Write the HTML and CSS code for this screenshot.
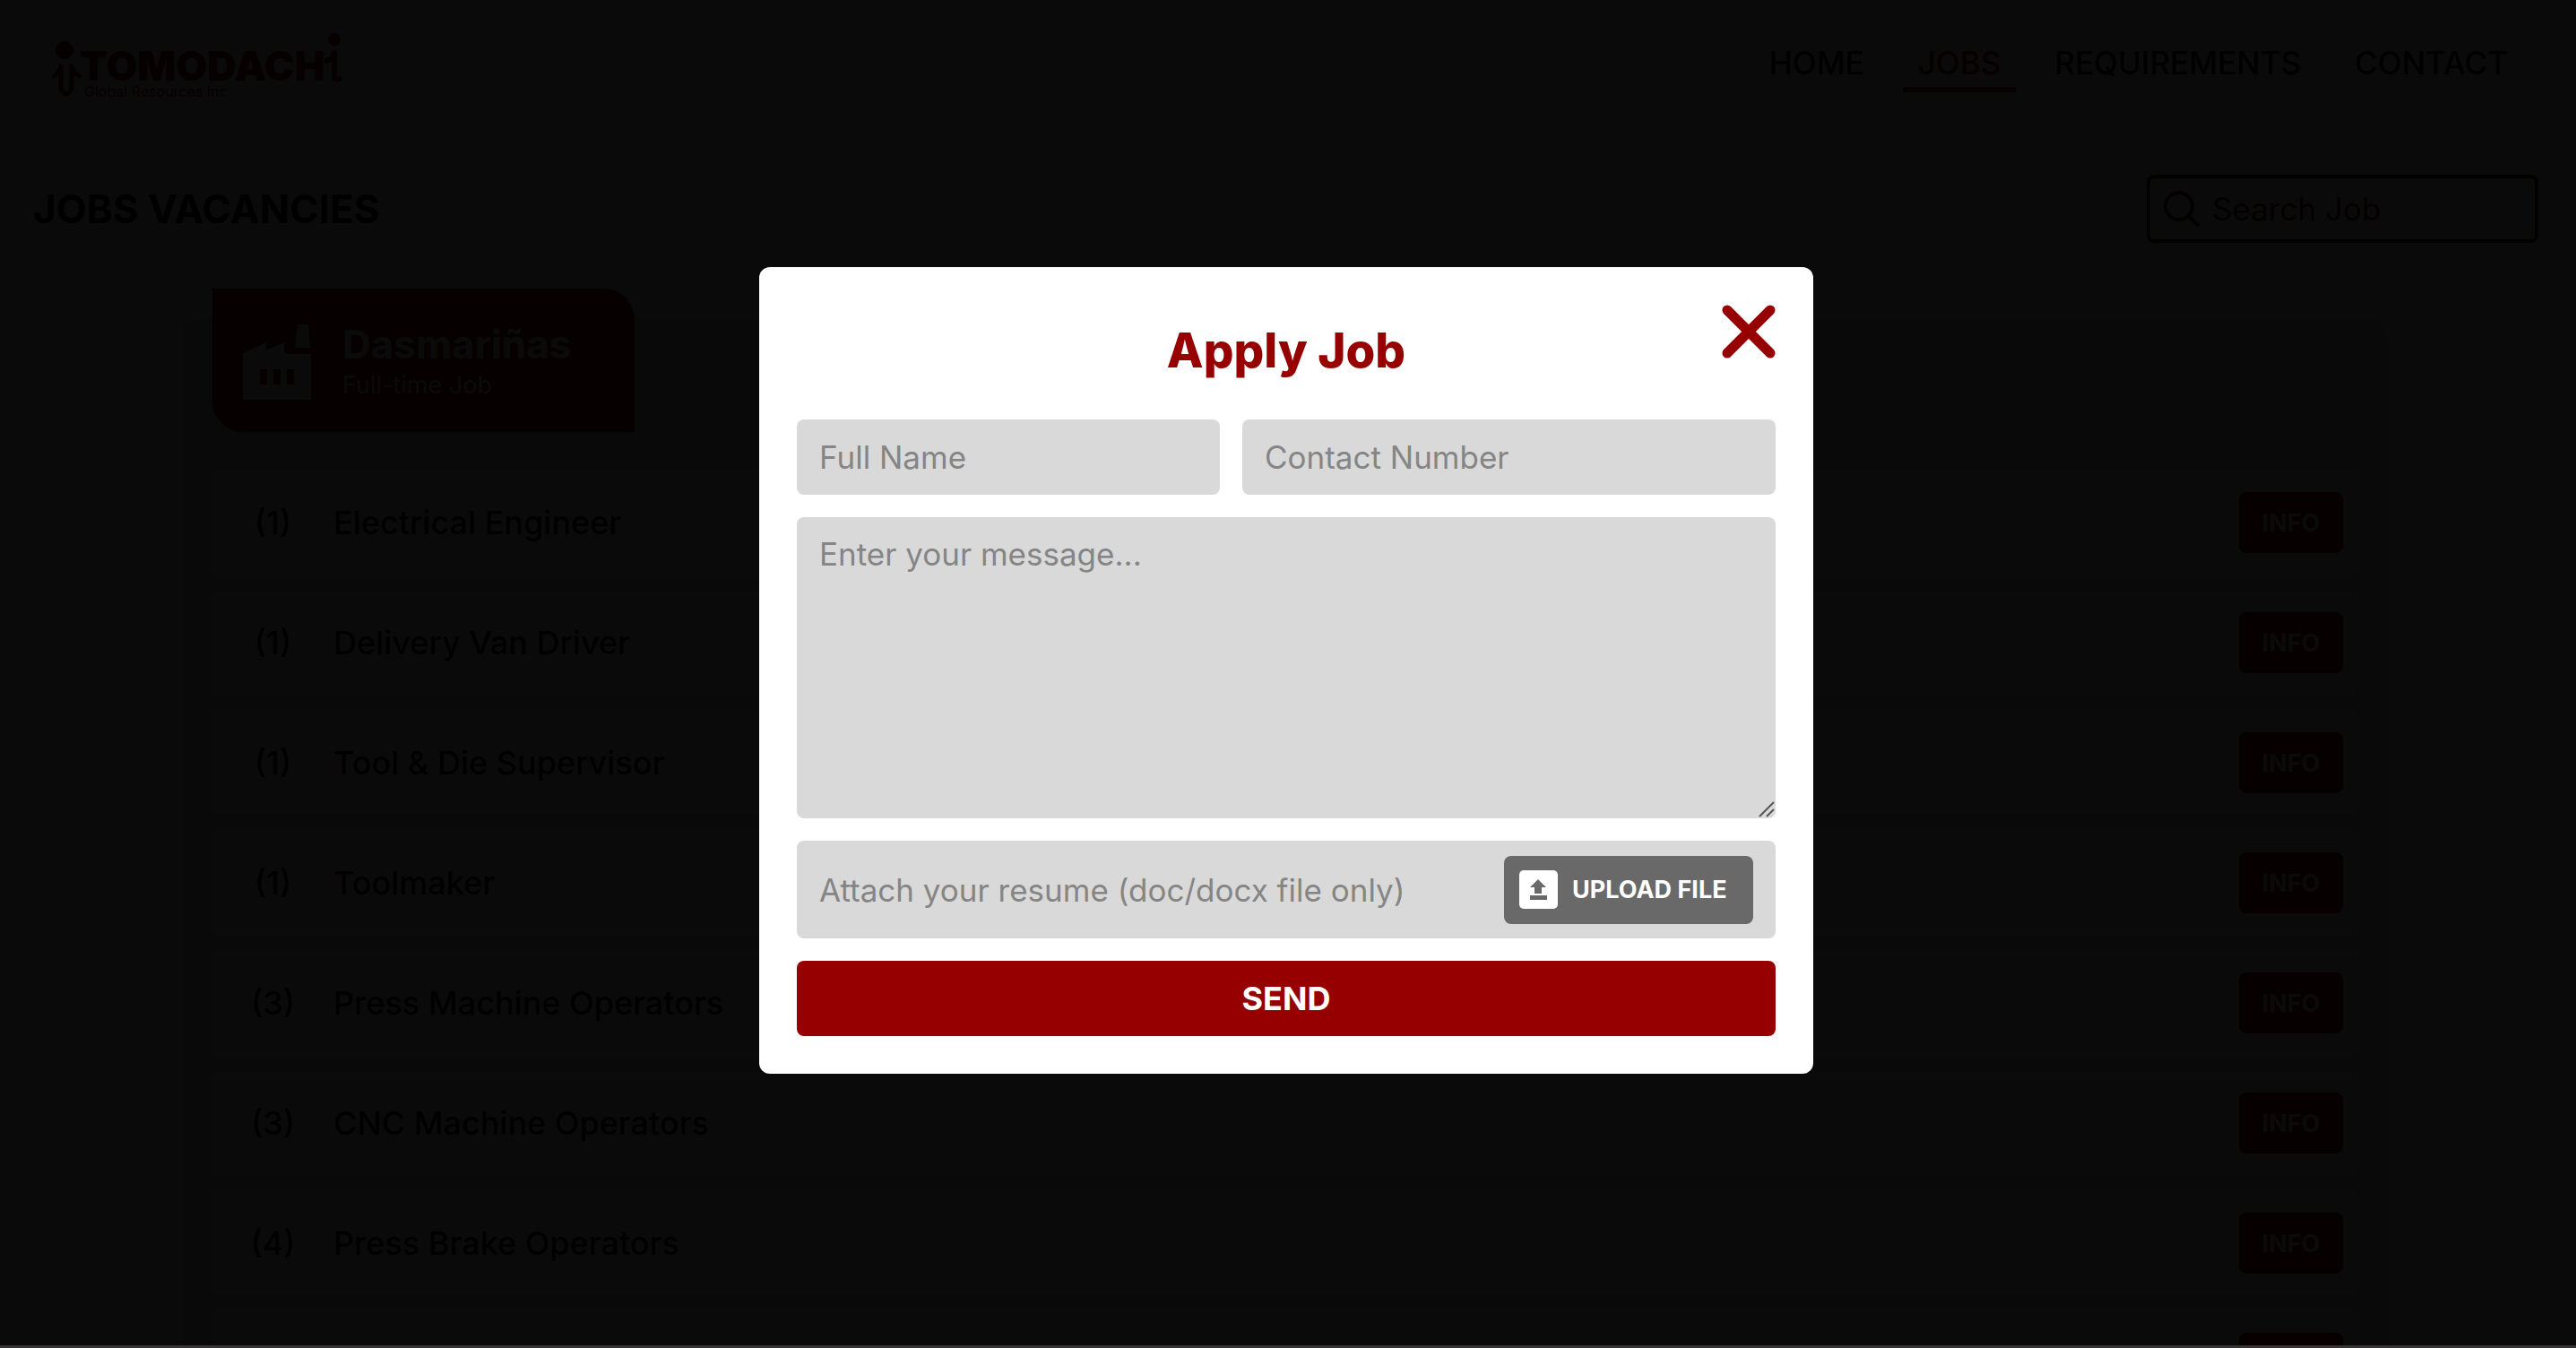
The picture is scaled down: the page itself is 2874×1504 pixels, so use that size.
FILE: index.html
```html
<!DOCTYPE html>
<html lang="en">
<head>
<meta charset="utf-8">
<meta name="viewport" content="width=device-width, initial-scale=1">
<title>Tomodachi Global Resources Inc - Jobs</title>
<link rel="stylesheet" href="styles.css">
</head>
<body class="modal-open">
<header class="site-header">
  <a class="logo" href="#" aria-label="Tomodachi Global Resources Inc">
    <svg width="330" height="80" viewBox="0 0 330 80">
      <g fill="#960000">
        <circle cx="18" cy="22" r="10"/>
        <circle cx="319" cy="10" r="7"/>
        <text class="logo-name" x="35" y="56">TOMODACH</text>
        <text class="logo-sub" x="40" y="74">Global Resources Inc</text>
      </g>
      <g fill="none" stroke="#960000" stroke-linecap="round" stroke-linejoin="round">
        <path stroke-width="5" d="M6 51q7-4 8-11v25q6 12 12 0V40q1 7 9 11"/>
        <path stroke-width="6" d="M310 34q8-2 9-9v25q0 6 6 4"/>
      </g>
    </svg>
  </a>
  <nav class="nav">
    <a href="#">HOME</a>
    <a href="#" class="active">JOBS</a>
    <a href="#">REQUIREMENTS</a>
    <a href="#">CONTACT</a>
  </nav>
</header>
<main>
  <div class="toolbar">
    <h1>JOBS VACANCIES</h1>
    <label class="search">
      <svg width="42" height="42" viewBox="0 0 42 42" fill="none" stroke="#600" stroke-width="4" stroke-linecap="round"><circle cx="18" cy="18" r="15"/><path d="M29 29l10 10"/></svg>
      <input type="search" placeholder="Search Job" aria-label="Search Job">
    </label>
  </div>
  <section class="panel">
    <div class="branch">
      <svg width="76" height="84" viewBox="0 0 76 84" fill="#fff"><path fill-rule="evenodd" d="M0 32L26 20v9L46 20v8q0 5 6 5h24v51H0zM19 50v17h8V50zM34 50v17h8V50zM49 50v17h8V50zM61 0h12l2 26H58z"/></svg>
      <div>
        <h2>Dasmariñas</h2>
        <p>Full-time Job</p>
      </div>
    </div>
    <ul class="jobs">
      <li><span class="count">(1)</span><span class="name">Electrical Engineer</span><button type="button">INFO</button></li>
      <li><span class="count">(1)</span><span class="name">Delivery Van Driver</span><button type="button">INFO</button></li>
      <li><span class="count">(1)</span><span class="name">Tool &amp; Die Supervisor</span><button type="button">INFO</button></li>
      <li><span class="count">(1)</span><span class="name">Toolmaker</span><button type="button">INFO</button></li>
      <li><span class="count">(3)</span><span class="name">Press Machine Operators</span><button type="button">INFO</button></li>
      <li><span class="count">(3)</span><span class="name">CNC Machine Operators</span><button type="button">INFO</button></li>
      <li><span class="count">(4)</span><span class="name">Press Brake Operators</span><button type="button">INFO</button></li>
      <li><span class="count"></span><span class="name"></span><button type="button" aria-label="Info"></button></li>
    </ul>
  </section>
</main>
<div class="overlay">
  <form class="modal" role="dialog" aria-labelledby="modal-title">
    <h2 id="modal-title">Apply Job</h2>
    <button class="close" type="button" aria-label="Close">
      <svg width="60" height="60" viewBox="0 0 60 60" fill="none" stroke="#960000" stroke-width="11" stroke-linecap="round"><path d="M6 6l48 48M54 6L6 54"/></svg>
    </button>
    <div class="fields">
      <input class="field" type="text" placeholder="Full Name" aria-label="Full Name">
      <input class="field" type="tel" placeholder="Contact Number" aria-label="Contact Number">
    </div>
    <div class="message-box">
      <textarea class="field message" placeholder="Enter your message..." aria-label="Message"></textarea>
      <svg class="grip" width="18" height="18" viewBox="0 0 18 18" fill="none" stroke="#555" stroke-width="2"><path d="M1 17L17 1M9 17l8-8"/></svg>
    </div>
    <div class="attach">
      <input type="text" placeholder="Attach your resume (doc/docx file only)" aria-label="Attached resume" readonly>
      <button class="upload" type="button">
        <svg width="43" height="43" viewBox="0 0 43 43"><rect width="43" height="43" rx="5" fill="#fff"/><path fill="#696969" d="M21 10l9 9h-5v7h-8v-7h-5zM12 28h19v5H12z"/></svg>
        UPLOAD FILE
      </button>
    </div>
    <button class="send" type="submit">SEND</button>
  </form>
</div>
</body>
</html>
```
FILE: styles.css
```css
:root {
  --red: #960000;
  --gray: #d9d9d9;
  --text: 36px;
  --input: 35px;
  --small: 27px;
  --heading: 44px;
}

* {
  box-sizing: border-box;
}

body {
  margin: 0;
  background: #fff;
  color: #000;
  font-family: Inter, "Open Sans", sans-serif;
  font-size: var(--text);
}

.modal-open {
  height: 100vh;
  overflow: hidden;
}

h1, h2, p, ul {
  margin: 0;
  padding: 0;
}

input, textarea, button {
  font: inherit;
}

input, textarea {
  font-size: var(--input);
}

button {
  border: 0;
  cursor: pointer;
}

.site-header {
  display: flex;
  justify-content: space-between;
  align-items: center;
  height: 157px;
  padding: 0 59px 8px 54px;
  border-bottom: 1px solid #e0e0e0;
}

.logo svg {
  display: block;
}

.logo-name {
  font-size: 45px;
  font-weight: 900;
}

.logo-sub {
  font-size: 16px;
}

.nav {
  display: flex;
  gap: 26px;
}

.nav a {
  padding: 0 17px 3px;
  border-bottom: 6px solid transparent;
  color: #000;
  font-size: var(--input);
  font-weight: 500;
  line-height: 48px;
  text-decoration: none;
}

.nav .active {
  border-color: var(--red);
  color: var(--red);
}

.toolbar {
  display: flex;
  justify-content: space-between;
  align-items: center;
  padding: 38px 42px 0 37px;
}

h1 {
  font-size: var(--heading);
  font-weight: 700;
}

.search {
  display: flex;
  align-items: center;
  gap: 13px;
  width: 437px;
  height: 76px;
  padding: 0 14px;
  border: 4px solid #600;
  border-radius: 8px;
}

.search input {
  flex: 1;
  min-width: 0;
  padding: 0;
  border: 0;
  outline: 0;
  background: none;
}

.search input::placeholder {
  color: #600;
}

.panel {
  margin: 85px 211px 0 203px;
  padding: 0 32px 34px 34px;
  border-radius: 17px;
  background: #e6e6e6;
}

.branch {
  display: flex;
  align-items: center;
  gap: 35px;
  width: 471px;
  height: 160px;
  padding: 4px 34px 0;
  border-radius: 0 34px 0 34px;
  background: var(--red);
  color: #fff;
  position: relative;
  top: -34px;
}

.branch h2 {
  font-size: var(--heading);
  font-weight: 700;
  line-height: 52px;
}

.branch p {
  font-size: var(--small);
  line-height: 40px;
}

.jobs {
  display: grid;
  gap: 16px;
  padding-top: 8px;
  list-style: none;
}

.jobs li {
  display: flex;
  align-items: center;
  height: 118px;
  padding-right: 17px;
  border-radius: 8px;
  background: #fff;
  color: #200000;
  font-weight: 500;
}

.count {
  width: 135px;
  text-align: center;
}

.name {
  flex: 1;
}

.jobs button {
  width: 116px;
  height: 68px;
  border-radius: 8px;
  background: var(--red);
  color: #fff;
  font-size: var(--small);
  font-weight: 700;
}

.overlay {
  display: flex;
  justify-content: center;
  align-items: center;
  position: fixed;
  inset: 0;
  padding: 0 4px 5px 0;
  border-bottom: 3px solid #383435;
  background: rgba(0, 0, 0, .96);
}

.modal {
  display: grid;
  gap: 25px;
  position: relative;
  width: min(1176px, 92vw);
  padding: 42px;
  border-radius: 12px;
  background: #fff;
}

.modal h2 {
  padding: 20px 0 21px;
  color: var(--red);
  font-size: 53px;
  font-weight: 800;
  line-height: 62px;
  text-align: center;
}

.close {
  position: absolute;
  top: 42px;
  right: 42px;
  padding: 0;
  background: none;
}

.close svg {
  display: block;
}

.fields {
  display: grid;
  grid-template-columns: 472fr 595fr;
  gap: 25px;
}

.field {
  width: 100%;
  min-width: 0;
  height: 84px;
  padding: 0 25px;
  border: 0;
  border-radius: 8px;
  background: var(--gray);
}

.message-box {
  position: relative;
}

.message {
  display: block;
  height: 336px;
  padding: 20px 25px;
  line-height: 42px;
  resize: vertical;
}

.message::-webkit-resizer {
  background: transparent;
}

.grip {
  position: absolute;
  right: 1px;
  bottom: 1px;
  pointer-events: none;
}

.modal ::placeholder {
  color: #858585;
}

.attach {
  display: flex;
  align-items: center;
  height: 109px;
  padding: 0 25px;
  border-radius: 8px;
  background: var(--gray);
}

.attach input {
  flex: 1;
  min-width: 0;
  padding: 0;
  border: 0;
  outline: 0;
  background: none;
}

.upload {
  display: flex;
  align-items: center;
  gap: 16px;
  width: 278px;
  height: 76px;
  padding: 0 17px;
  border-radius: 8px;
  background: #696969;
  color: #fff;
  font-size: var(--small);
  font-weight: 700;
  white-space: nowrap;
}

.send {
  height: 84px;
  border-radius: 8px;
  background: var(--red);
  color: #fff;
  font-weight: 700;
}
```
